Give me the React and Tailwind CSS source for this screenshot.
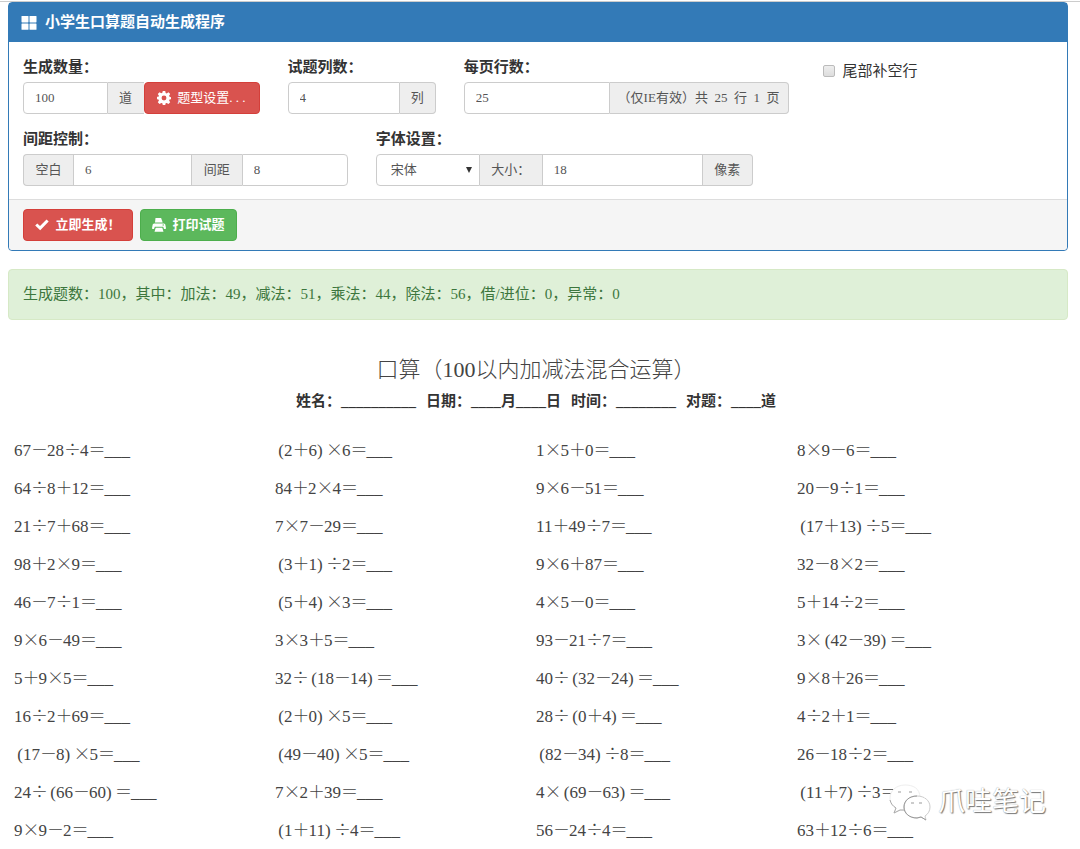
const rows = [
    ['67－28÷4＝', '(2＋6)×6＝', '1×5＋0＝', '8×9－6＝'],
    ['64÷8＋12＝', '84＋2×4＝', '9×6－51＝', '20－9÷1＝'],
    ['21÷7＋68＝', '7×7－29＝', '11＋49÷7＝', '(17＋13)÷5＝'],
    ['98＋2×9＝', '(3＋1)÷2＝', '9×6＋87＝', '32－8×2＝'],
    ['46－7÷1＝', '(5＋4)×3＝', '4×5－0＝', '5＋14÷2＝'],
    ['9×6－49＝', '3×3＋5＝', '93－21÷7＝', '3×(42－39)＝'],
    ['5＋9×5＝', '32÷(18－14)＝', '40÷(32－24)＝', '9×8＋26＝'],
    ['16÷2＋69＝', '(2＋0)×5＝', '28÷(0＋4)＝', '4÷2＋1＝'],
    ['(17－8)×5＝', '(49－40)×5＝', '(82－34)÷8＝', '26－18÷2＝'],
    ['24÷(66－60)＝', '7×2＋39＝', '4×(69－63)＝', '(11＋7)÷3＝'],
    ['9×9－2＝', '(1＋11)÷4＝', '56－24÷4＝', '63＋12÷6＝'],
];

const inputClass = "min-w-0 h-8 px-[11px] bg-white border border-[#ccc] text-[13px] text-[#555] focus:outline-none focus:border-[#66afe9]";
const addonClass = "h-8 flex items-center justify-center whitespace-nowrap bg-[#eee] border-y border-[#ccc] text-[13px] text-[#555]";
const labelClass = "block mb-[5px] text-[15px] leading-5 font-bold";

const GridIcon = () => (
    <svg viewBox="0 0 16 14" className="w-4 h-3.5" fill="currentColor" aria-hidden="true">
        <rect x="0.5" y="0" width="7" height="6.4" rx="0.6" />
        <rect x="8.5" y="0" width="7" height="6.4" rx="0.6" />
        <rect x="0.5" y="7.4" width="7" height="6.4" rx="0.6" />
        <rect x="8.5" y="7.4" width="7" height="6.4" rx="0.6" />
    </svg>
);

const CogIcon = () => (
    <svg viewBox="0 0 16 16" className="w-3.5 h-3.5" fill="currentColor" fillRule="evenodd" aria-hidden="true">
        <path d="M6.6 0h2.8l.5 2.3 1.2.5 2-1.3 2 2-1.3 2 .5 1.2L16 7v2.500l-1.700.2-.5 1.200 1.300 2-2 2-2-1.300-1.200.5L9.400 16H6.600l-.5-1.900-1.200-.5-2 1.300-2-2 1.300-2-.5-1.200L0 9.400V6.600l1.700-.1.500-1.200-1.300-2 2-2 2 1.300 1.200-.5zM8 5.200a2.800 2.800 0 1 0 0 5.600 2.800 2.800 0 0 0 0-5.600z" />
    </svg>
);

const CheckIcon = () => (
    <svg viewBox="0 0 14 12" className="w-3.5 h-3" fill="currentColor" aria-hidden="true">
        <path d="M.2 6.600 2.300 4.500l2.700 2.400L11.500.4l2.200 2L5.200 11.300z" />
    </svg>
);

const PrintIcon = () => (
    <svg viewBox="0 0 14 14" className="w-3.5 h-3.5" fill="currentColor" fillRule="evenodd" aria-hidden="true">
        <path d="M3.500 0h5.600l1.600 4.600H3zM2 5.400h10q1 .2 1.300 1.200l.7 3.600q0 .8-.8.8h-1.200l-.8-2.200H2.800L2 11H.8q-.8 0-.8-.8l.7-3.600Q1 5.600 2 5.400zM10.500 6.500v1H12v-1zM3.700 9.800h6.600l1.200 4H2.500z" />
    </svg>
);

// operators take a full-width slot, brackets lean towards what they enclose
const Question = ({ text }) => (
    <>
        {[...text].map((ch, i) => {
            if ('＋－×÷＝'.includes(ch)) {
                return <span key={i} className="inline-block w-4 text-center font-light font-['Noto_Sans_CJK_SC',sans-serif] leading-none">{ch}</span>;
            }
            if (ch === '(') return <span key={i} className="inline-block w-[9px] text-right">(</span>;
            if (ch === ')') return <span key={i} className="inline-block w-[9px]">)</span>;
            return <span key={i}>{ch}</span>;
        })}
        <span>___</span>
    </>
);

const Settings = () => (
    <form
        onSubmit={(e) => e.preventDefault()}
        className="rounded-sm border border-[#337ab7] bg-white"
    >
        <h1 className="flex items-center gap-2 h-[39px] px-3 bg-[#337ab7] text-white text-[15px] font-bold">
            <GridIcon />
            小学生口算题自动生成程序
        </h1>

        <div className="grid grid-cols-12 gap-y-[15px] pt-[15px] pb-[13px]">
            <div className="col-span-3 px-3.5">
                <label htmlFor="amount" className={labelClass}>生成数量：</label>
                <div className="flex">
                    <input id="amount" defaultValue="100" className={`${inputClass} flex-1 rounded-l-sm`} />
                    <span className={`${addonClass} w-9`}>道</span>
                    <button type="button" className="flex items-center justify-center gap-1.5 w-[116px] h-8 rounded-sm bg-[#d9534f] border border-[#d43f3a] text-white text-[13px] whitespace-nowrap">
                        <CogIcon />
                        <span>题型设置. . .</span>
                    </button>
                </div>
            </div>
            <div className="col-span-2 px-3.5">
                <label htmlFor="columns" className={labelClass}>试题列数：</label>
                <div className="flex">
                    <input id="columns" defaultValue="4" className={`${inputClass} flex-1 rounded-l-sm`} />
                    <span className={`${addonClass} w-9 border-r rounded-r-sm`}>列</span>
                </div>
            </div>
            <div className="col-span-4 px-3.5">
                <label htmlFor="lines" className={labelClass}>每页行数：</label>
                <div className="flex">
                    <input id="lines" defaultValue="25" className={`${inputClass} flex-1 rounded-l-sm`} />
                    <span className={`${addonClass} w-[179px] border-r rounded-r-sm whitespace-pre`}>（仅IE有效）共  25  行  1  页</span>
                </div>
            </div>
            <div className="col-span-3 pl-5 pt-1">
                <label className="flex items-center gap-2 text-[15px] leading-5">
                    <input type="checkbox" className="appearance-none w-3 h-3 rounded-xs border border-[#bbb] bg-linear-to-b from-[#eee] to-[#ddd] checked:bg-[#337ab7]" />
                    尾部补空行
                </label>
            </div>

            <div className="col-span-4 px-3.5">
                <label htmlFor="blank" className={labelClass}>间距控制：</label>
                <div className="flex">
                    <span className={`${addonClass} w-[50px] border-l rounded-l-sm`}>空白</span>
                    <input id="blank" defaultValue="6" className={`${inputClass} flex-1`} />
                    <label htmlFor="spacing" className={`${addonClass} w-[50px]`}>间距</label>
                    <input id="spacing" defaultValue="8" className={`${inputClass} w-[106px] rounded-r-sm`} />
                </div>
            </div>
            <div className="col-span-5 px-3.5">
                <label htmlFor="font" className={labelClass}>字体设置：</label>
                <div className="flex max-w-[377px]">
                    <div className="relative w-[104px]">
                        <select id="font" className="appearance-none w-full h-8 pl-3.5 rounded-l-sm border border-[#ccc] bg-white text-[13px] text-[#555]">
                            <option>宋体</option>
                            <option>黑体</option>
                            <option>楷体</option>
                        </select>
                        <svg viewBox="0 0 6 6" className="absolute right-2 top-[13px] w-1.5 h-1.5 pointer-events-none" fill="#333" aria-hidden="true">
                            <path d="M0 0h6L3 6z" />
                        </svg>
                    </div>
                    <label htmlFor="size" className={`${addonClass} w-[62px]`}>大小：</label>
                    <input id="size" defaultValue="18" className={`${inputClass} flex-1`} />
                    <span className={`${addonClass} w-[50px] border-r rounded-r-sm`}>像素</span>
                </div>
            </div>
        </div>

        <div className="flex gap-[7px] px-3.5 py-[9px] border-t border-[#ddd] bg-[#f5f5f5] rounded-b-sm">
            <button type="submit" className="flex items-center justify-center gap-1.5 w-[110px] h-8 rounded-sm bg-[#d9534f] border border-[#d43f3a] text-white text-[13px] font-bold">
                <CheckIcon />
                立即生成！
            </button>
            <button type="button" onClick={() => window.print()} className="flex items-center justify-center gap-1.5 w-[97px] h-8 rounded-sm bg-[#5cb85c] border border-[#4cae4c] text-white text-[13px] font-bold">
                <PrintIcon />
                打印试题
            </button>
        </div>
    </form>
);

const Watermark = () => (
    <div className="absolute right-[22px] bottom-7 flex items-center gap-1.5 pointer-events-none">
        <svg viewBox="0 0 44 38" className="w-11 h-[38px]" fill="#fff" strokeLinejoin="round" aria-hidden="true">
            <path stroke="#eee" d="M17 2C8 2 2 8 2 15c0 4 2 8 6 10l-2 5 6-3c10 2 20-2 20-12S25 2 17 2z" />
            <path stroke="#aaa" d="M2 17c1 4 3 6 6 8l-2 5 6-3 5 0" fill="none" />
            <path stroke="#ccc" d="M29 13c-8 0-13 5-13 11s5 11 13 11l4-1 5 3-1-4c3-2 5-5 5-9 0-6-5-11-13-11z" />
            <path fill="none" stroke="#999" d="M29 13c-8 0-13 5-13 11s5 11 13 11l4-1 5 3M10 9h3M21 9h3M23 20h3M31 20h3" />
            <path stroke="none" d="M33 9h11v6h-7z" />
        </svg>
        <span className="text-[27px] leading-9 text-white [text-shadow:1px_1px_1px_#777,0_0_1px_#999]">爪哇笔记</span>
    </div>
);

const Worksheet = () => (
    <section className="relative pl-1.5 pr-2.5">
        <h2 className="text-center text-[22px] leading-8 font-light text-[#444]">口算（100以内加减法混合运算）</h2>
        <p className="flex justify-center gap-2.5 text-[15px] leading-[30px] font-bold whitespace-nowrap">
            <span>姓名：__________</span>
            <span>日期：____月____日</span>
            <span>时间：________</span>
            <span>对题：____道</span>
        </p>
        <table className="w-full table-fixed mt-[15px] text-[17px] text-[#444]">
            <tbody>
                {rows.map((row, i) => (
                    <tr key={i} className="h-[38px]">
                        {row.map((text) => (
                            <td key={text} className="p-0 leading-5 whitespace-nowrap align-middle">
                                <Question text={text} />
                            </td>
                        ))}
                    </tr>
                ))}
            </tbody>
        </table>
        <Watermark />
    </section>
);

const App = () => {
    return (
        <main className="border-t border-[#ccc] mt-px px-2 pr-3 bg-white text-[#333] font-['Liberation_Serif','Noto_Sans_CJK_SC',serif]">
            <Settings />
            <p className="mt-[18px] px-3.5 py-3.5 rounded-sm border border-[#d6e9c6] bg-[#dff0d8] text-[#3c763d] text-[15px] leading-[21px]">
                生成题数：100，其中：加法：49，减法：51，乘法：44，除法：56，借/进位：0，异常：0
            </p>
            <div className="mt-[34px]">
                <Worksheet />
            </div>
        </main>
    );
};

export default App;
